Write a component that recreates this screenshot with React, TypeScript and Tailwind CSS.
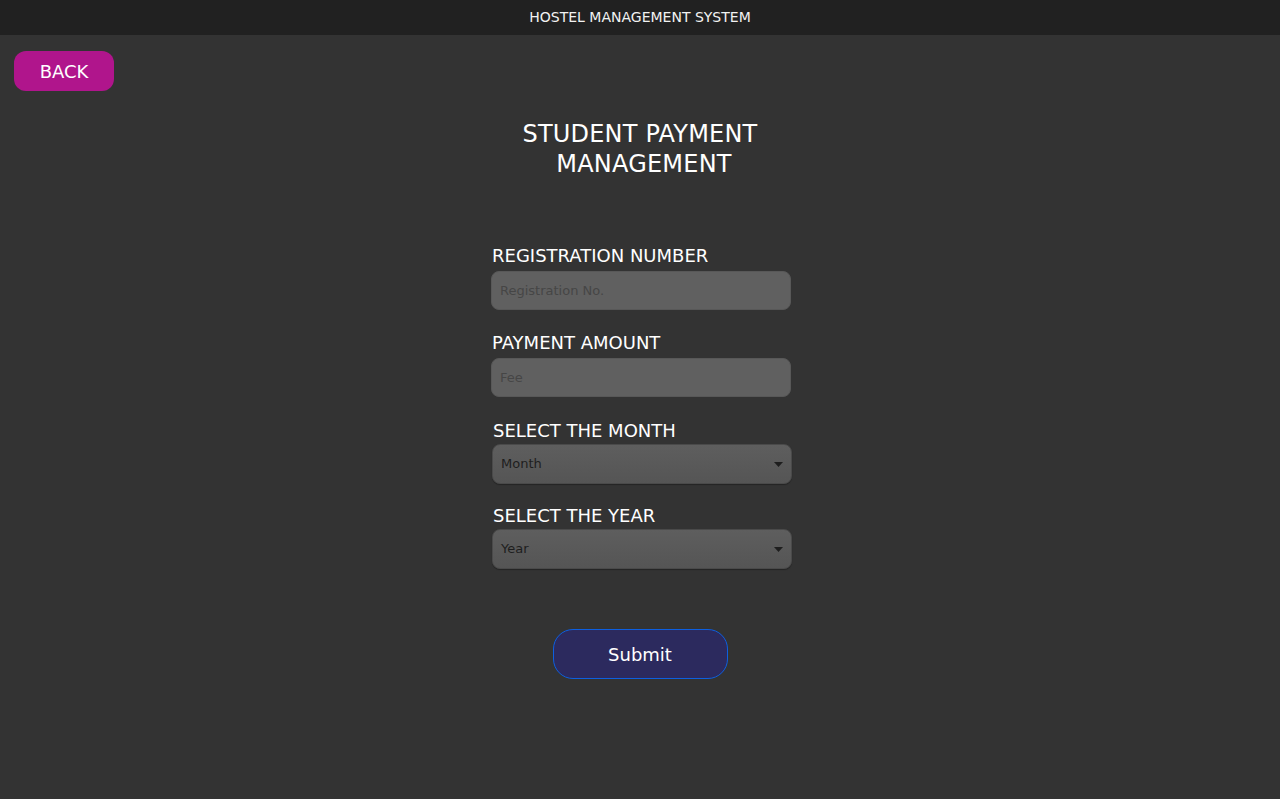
export default function App() {
  return (
    <div className="min-h-[799px] bg-[#333333] font-['DejaVu_Sans',sans-serif] text-white">
      {/* Header */}
      <div className="h-[35px] bg-[#212121] flex items-center justify-center text-[14px] text-[#f2f2f2]">
        HOSTEL MANAGEMENT SYSTEM
      </div>

      <div className="px-[14px] pt-[16px]">
        <button className="w-[100px] h-[40px] rounded-[12px] bg-[#b0158c] text-[18px] text-white">BACK</button>
      </div>

      <div className="flex flex-col items-center">
        <h1 className="mt-[28px] w-[260px] flex flex-col items-center text-[24px] leading-[30px] font-normal tracking-[0.2px]">
          <span>STUDENT PAYMENT</span>
          <span className="pl-[8px]">MANAGEMENT</span>
        </h1>

        <form className="mt-[66px] ml-[2px] w-[300px] flex flex-col">
          <Field label="REGISTRATION NUMBER" placeholder="Registration No." />
          <Field label="PAYMENT AMOUNT" placeholder="Fee" className="mt-[22px]" />
          <SelectField label="SELECT THE MONTH" value="Month" className="mt-[23px]" />
          <SelectField label="SELECT THE YEAR" value="Year" className="mt-[21px]" />

          <div className="flex justify-center mt-[60px] -ml-[2px]">
            <button
              type="button"
              className="w-[175px] h-[50px] rounded-[20px] bg-[#2c2a5e] border border-[#0d5fe0] text-[18px] text-white"
            >
              Submit
            </button>
          </div>
        </form>
      </div>
    </div>
  );
}

function Field({ label, placeholder, className = '' }: { label: string; placeholder: string; className?: string }) {
  return (
    <div className={className}>
      <div className="pl-[1px] text-[18px] leading-[22px] h-[22px]">{label}</div>
      <input
        placeholder={placeholder}
        className="mt-[4px] w-[300px] h-[39px] rounded-[8px] bg-[#606060] border border-[#585858] px-[8px] text-[13px] text-white placeholder:text-[#464646] outline-none"
      />
    </div>
  );
}

function SelectField({ label, value, className = '' }: { label: string; value: string; className?: string }) {
  return (
    <div className={className}>
      <div className="pl-[2px] text-[18px] leading-[22px] h-[22px]">{label}</div>
      <div className="mt-[2px] ml-[1px] w-[300px] h-[40px] rounded-[8px] border border-[#4a4a4a] bg-gradient-to-b from-[#5e5e5e] to-[#555555] shadow-[0_1px_1px_rgba(0,0,0,0.3)] flex items-center justify-between pl-[8px] pr-[8px]">
        <span className="text-[13px] text-[#1e1e1e]">{value}</span>
        <svg width="9" height="5" viewBox="0 0 9 5">
          <path d="M0 0 L9 0 L4.5 5 Z" fill="#1e1e1e" />
        </svg>
      </div>
    </div>
  );
}
